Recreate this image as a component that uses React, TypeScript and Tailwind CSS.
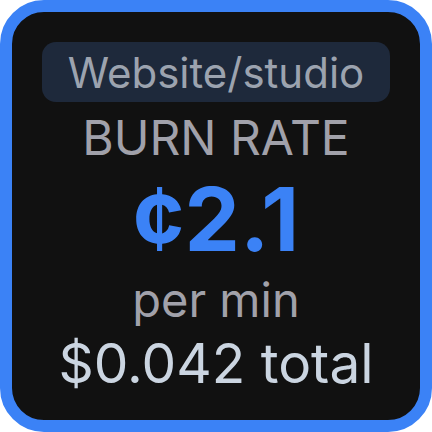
export default function App() {
  return (
    <div className="w-[432px] h-[432px] bg-white" style={{ fontFamily: "Inter, 'Noto Sans', sans-serif" }}>
      <div className="w-full h-full rounded-[44px] border-[12px] border-[#3b82f6] bg-[#111111] flex flex-col items-center pt-[30px]">
        <div className="w-[348px] h-[60px] rounded-[14px] bg-[#1e293b] text-[#9ca3af] text-[42px] leading-none pt-[10px] text-center">
          Website/studio
        </div>
        <div className="mt-[11.5px] text-[48px] leading-none text-[#a1a1aa]">BURN RATE</div>
        <div className="mt-[13.5px] text-[88px] leading-none font-bold text-[#3b82f6]">¢2.1</div>
        <div className="mt-[12.5px] text-[47px] leading-none text-[#a1a1aa]">per min</div>
        <div className="mt-[13.5px] text-[55px] leading-none text-[#cbd5e1]">$0.042 total</div>
      </div>
    </div>
  );
}
